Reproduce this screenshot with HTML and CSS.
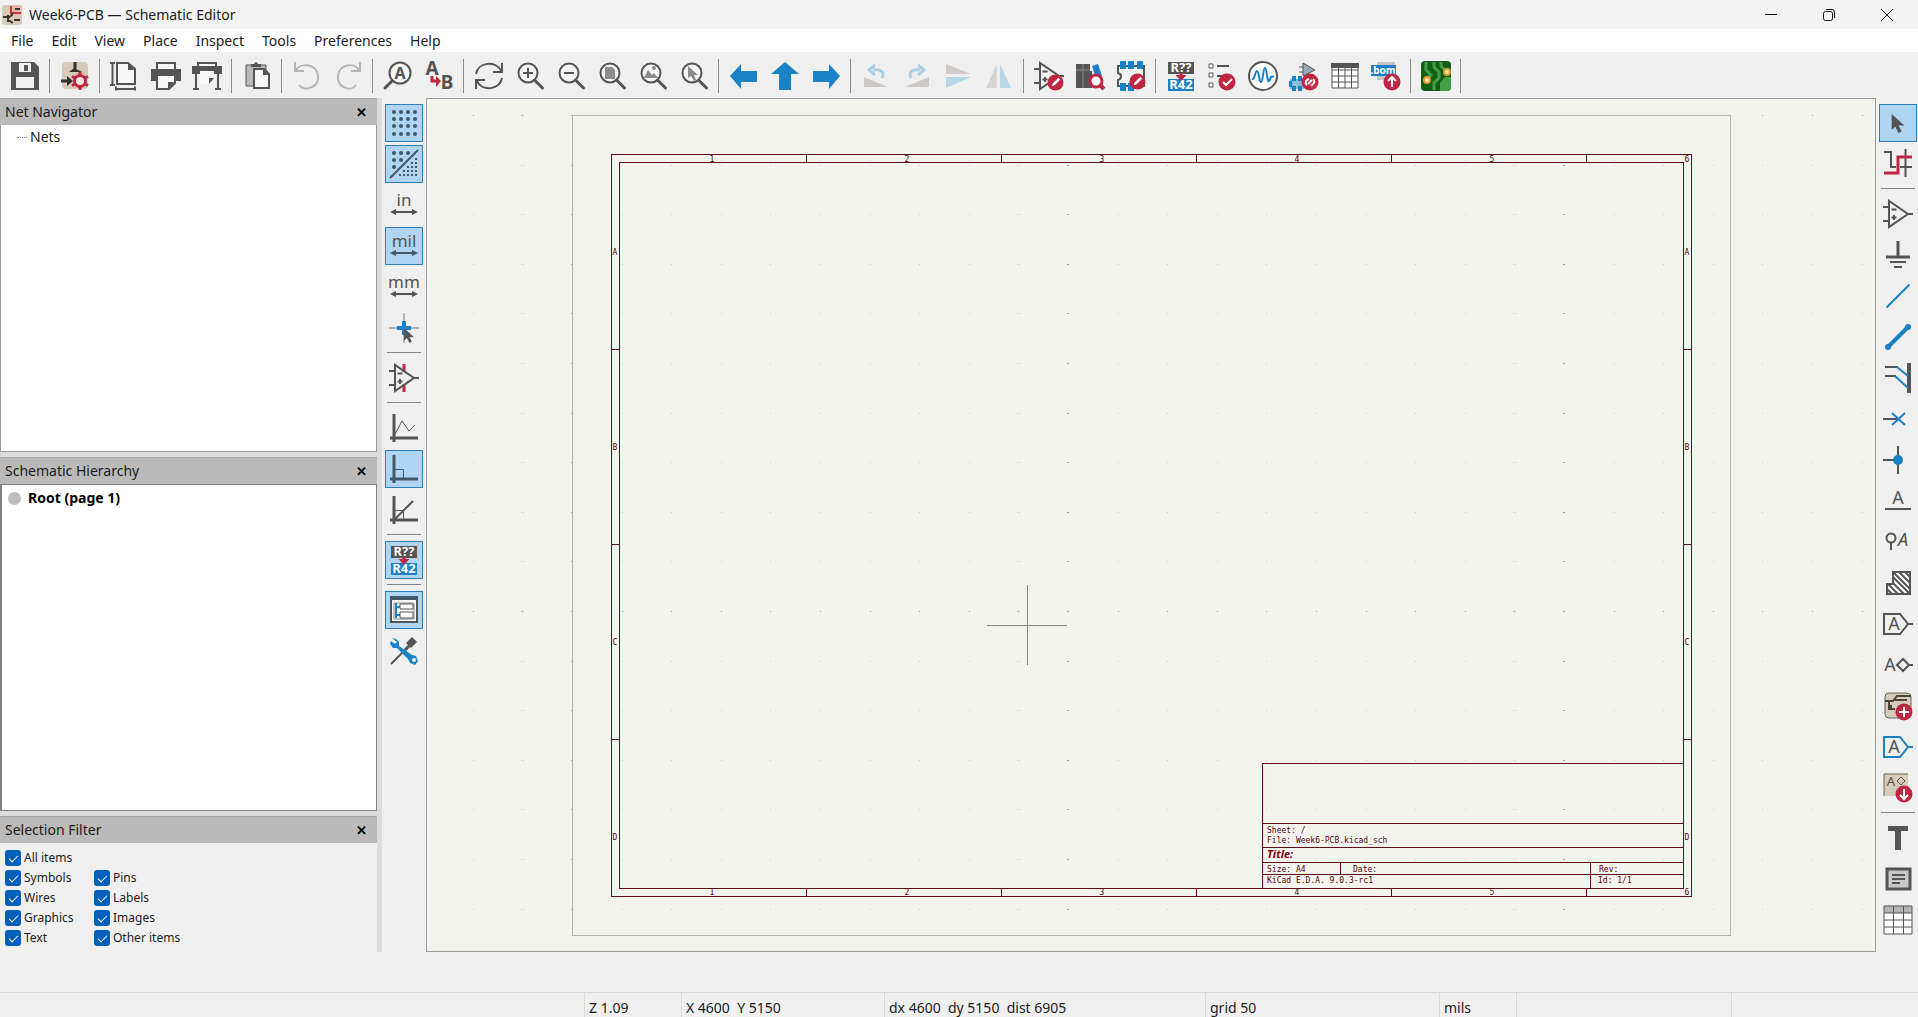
FILE: index.html
```html
<!DOCTYPE html>
<html lang="en">
<head>
<meta charset="utf-8">
<title>Week6-PCB — Schematic Editor</title>
<link rel="stylesheet" href="styles.css">
</head>
<body>
<svg class="defs" aria-hidden="true">
  <symbol id="lens" viewBox="0 0 30 30"><circle cx="13" cy="12" r="9.5" fill="#f6f6f6" stroke="#545454" stroke-width="2"/><path d="M19.500 19 27.500 27" stroke="#545454" stroke-width="3" stroke-linecap="round"/></symbol>
  <symbol id="annotate" viewBox="0 0 30 30"><path d="M2 1h26v12H2z" fill="#545454"/><path d="M2 18h26v12H2z" fill="#1a81c4"/><path d="M13.500 12h3v2h4L15 20l-5.500-6h4z" fill="#bf2641"/></symbol>
  <symbol id="amp" viewBox="0 0 30 30"><path d="M6 2v26L25 15zM0 8h6M0 22h6M25 15h5M8.500 10.500h5M8.500 18.500h5M11 16v5" fill="none" stroke="#545454" stroke-width="2"/></symbol>
  <symbol id="banned" viewBox="0 0 18 18"><circle cx="9" cy="9" r="8.500" fill="#bf2641"/><path d="M5 13l1-3 6-6 2 2-6 6z" fill="#fff"/></symbol>
  <symbol id="pointer" viewBox="0 0 12 18"><path d="M0 0v15l3.500-3 3 6 3-1.500-3-5.500H12z" fill="#545454"/></symbol>
</svg>

<header class="titlebar">
  <svg class="app-icon" viewBox="0 0 20 20"><rect width="20" height="20" rx="3" fill="#d5cbb8"/><path d="M9 0h8a3 3 0 0 1 3 3v7H9z" fill="#f3b5b0"/><path d="M9 1v7h10" stroke="#c03a3a" stroke-width="2" fill="none"/><path d="M1 12h5M6 10v7M6 13l4-3V8M6 15l5 3M12 15h6M13 4h5" stroke="#38352f" stroke-width="2" fill="none"/></svg>
  <h1>Week6-PCB — Schematic Editor</h1>
  <div class="window-buttons">
    <button aria-label="Minimize"><svg viewBox="0 0 14 14"><path d="M1 6.500h12"/></svg></button>
    <button aria-label="Restore"><svg viewBox="0 0 14 14"><rect x="1.500" y="3.500" width="9" height="9" rx="2"/><path d="M4 1.500h6a2.500 2.500 0 0 1 2.500 2.500v6"/></svg></button>
    <button aria-label="Close"><svg viewBox="0 0 14 14"><path d="M1 1l12 12M13 1L1 13"/></svg></button>
  </div>
</header>

<nav class="menubar">
  <button>File</button><button>Edit</button><button>View</button><button>Place</button><button>Inspect</button><button>Tools</button><button>Preferences</button><button>Help</button>
</nav>

<div class="toolbar" role="toolbar" aria-label="Main">
  <button aria-label="Save"><svg viewBox="0 0 30 30"><path d="M1 1h23l5 5v23H1z" fill="#545454"/><path d="M6 16h18v11H6z" fill="#f0f0f0"/><path d="M9 2h12v9H9z" fill="#f0f0f0"/><path d="M14 4h4v6h-4z" fill="#545454"/></svg></button>
  <hr>
  <button aria-label="Schematic setup"><svg viewBox="0 0 30 30"><rect x="2" y="1" width="26" height="27" rx="4" fill="#d5cbb8"/><path d="M15 1v7M1 20h9" stroke="#333" stroke-width="3" fill="none"/><path d="M7 15l6 5-6 5zM9 11l5-4 8 4z" fill="#333"/><circle cx="20" cy="20" r="5.500" fill="#f3e6e2" stroke="#bf2641" stroke-width="3"/><path d="M20 11v4M20 25v4M12 15.500l4 2M24 22.500l4 2M12 24.500l4-2M24 17.500l4-2" stroke="#bf2641" stroke-width="3"/></svg></button>
  <hr>
  <button aria-label="Page settings"><svg viewBox="0 0 30 30"><path d="M7 2h11l7 6v15H7z" fill="#f8f8f8" stroke="#545454" stroke-width="2"/><path d="M18 2v7h7z" fill="#545454"/><path d="M0 2h5M0 24h5M2.500 2v22M6 28h19M6 25.500v4M25 25.500v4" stroke="#545454" stroke-width="2"/></svg></button>
  <button aria-label="Print"><svg viewBox="0 0 30 30"><path d="M6 9V2h18v7" fill="#f8f8f8" stroke="#545454" stroke-width="2"/><path d="M0 8h30v12H0z" fill="#545454"/><path d="M6 14h18v8l-6 6H6z" fill="#f8f8f8" stroke="#545454" stroke-width="2"/><path d="M17 21h7l-7 7z" fill="#545454"/></svg></button>
  <button aria-label="Plot"><svg viewBox="0 0 30 30"><path d="M6 6V2h18v4" fill="#f8f8f8" stroke="#545454" stroke-width="2"/><path d="M0 5h30v8H0z" fill="#545454"/><path d="M8 10h14v8l-5 5H8z" fill="#f8f8f8"/><path d="M17 17h5l-5 6zM3 13h2v14h2v2H1v-2h2zM25 13h2v14h2v2h-6v-2h2z" fill="#545454"/></svg></button>
  <hr>
  <button aria-label="Paste"><svg viewBox="0 0 30 30"><path d="M4 4h20v21H4z" fill="#b9b9b9" stroke="#545454" stroke-width="1"/><path d="M9 6V3h3q2-4 4 0h3v3z" fill="#545454"/><path d="M12 8h10l5 5v14H12z" fill="#f8f8f8" stroke="#545454" stroke-width="2"/><path d="M21 8v6h6z" fill="#545454"/></svg></button>
  <hr>
  <button aria-label="Undo" disabled><svg viewBox="0 0 30 30"><path d="M3 1v9h9M4 9C9 1 25 3 26 15S12 31 7 24" fill="none" stroke="#b5b5b5" stroke-width="2"/></svg></button>
  <button aria-label="Redo" disabled><svg viewBox="0 0 30 30"><path d="M27 1v9h-9M26 9C21 1 6 3 5 15s13 16 18 9" fill="none" stroke="#b5b5b5" stroke-width="2"/></svg></button>
  <hr>
  <button aria-label="Find"><svg viewBox="0 0 30 30"><circle cx="17" cy="12" r="10.500" fill="#f6f6f6" stroke="#545454" stroke-width="2"/><path d="M9 20l-7 7" stroke="#545454" stroke-width="3" stroke-linecap="round"/><text x="17" y="18" class="bold">A</text></svg></button>
  <button aria-label="Find and replace"><svg viewBox="0 0 30 30"><text x="8" y="14" class="bold large">A</text><text x="23" y="28" class="bold large">B</text><path d="M8 15v5h6" fill="none" stroke="#bf2641" stroke-width="3"/><path d="M12 15l5 5-5 6z" fill="#bf2641"/></svg></button>
  <hr>
  <button aria-label="Refresh"><svg viewBox="0 0 30 30"><path d="M2 13C4 1 22-1 27 10M28 17C26 29 8 31 3 20M28 2v9h-9M2 28v-9h9" fill="none" stroke="#545454" stroke-width="2"/></svg></button>
  <button aria-label="Zoom in"><svg viewBox="0 0 30 30"><use href="#lens"/><path d="M8 12h10M13 7v10" stroke="#545454" stroke-width="2"/></svg></button>
  <button aria-label="Zoom out"><svg viewBox="0 0 30 30"><use href="#lens"/><path d="M8 12h10" stroke="#545454" stroke-width="2"/></svg></button>
  <button aria-label="Zoom to fit"><svg viewBox="0 0 30 30"><use href="#lens"/><path d="M8 6h7l3 3v9H8z" fill="#8c8c8c"/></svg></button>
  <button aria-label="Zoom to objects"><svg viewBox="0 0 30 30"><use href="#lens"/><path d="M6 17l4-8 4 5 2-2 4 5z" fill="#8c8c8c"/><circle cx="16" cy="7" r="2" fill="#8c8c8c"/></svg></button>
  <button aria-label="Zoom to selection"><svg viewBox="0 0 30 30"><use href="#lens"/><path d="M9 5v12l3-2 3 5 2-1-2-5h4z" fill="#8c8c8c"/></svg></button>
  <hr>
  <button aria-label="Navigate back"><svg viewBox="0 0 30 30"><path d="M1 15 12 3v7h16v11H12v7z" fill="#1a81c4"/></svg></button>
  <button aria-label="Navigate up"><svg viewBox="0 0 30 30"><path d="M15 1 29 13h-8v16H9V13H1z" fill="#1a81c4"/></svg></button>
  <button aria-label="Navigate forward"><svg viewBox="0 0 30 30"><path d="M29 15 18 3v7H2v11h16v7z" fill="#1a81c4"/></svg></button>
  <hr>
  <button aria-label="Rotate left" disabled><svg viewBox="0 0 30 30"><path d="M3 16v10h24z" fill="#cfc8c5"/><path d="M21 17c3-6-1-9-9-8M14 4L8 9l6 5" fill="none" stroke="#a9cfe3" stroke-width="3"/></svg></button>
  <button aria-label="Rotate right" disabled><svg viewBox="0 0 30 30"><path d="M27 16v10H3z" fill="#cfc8c5"/><path d="M9 17C6 11 10 8 18 9M16 4l6 5-6 5" fill="none" stroke="#a9cfe3" stroke-width="3"/></svg></button>
  <button aria-label="Mirror vertically" disabled><svg viewBox="0 0 30 30"><path d="M3 3v10h25z" fill="#d2cac8"/><path d="M3 27V16h25z" fill="#b5d7e6"/></svg></button>
  <button aria-label="Mirror horizontally" disabled><svg viewBox="0 0 30 30"><path d="M2 27h11V3z" fill="#d6d6d6"/><path d="M27 27H16V3z" fill="#b5d7e6"/></svg></button>
  <hr>
  <button aria-label="Symbol editor"><svg viewBox="0 0 30 30"><use href="#amp"/><use href="#banned" x="13" y="13" width="17" height="17"/></svg></button>
  <button aria-label="Symbol library browser"><svg viewBox="0 0 30 30"><path d="M1 3h14v24H1z" fill="#545454"/><path d="M8 3v24M1 9h14" stroke="#8a8a8a"/><path d="M17 5l6-2 4 12-6 2z" fill="#1a81c4"/><path d="M16 10v17" stroke="#545454" stroke-width="2"/><circle cx="21" cy="20" r="6" fill="#fff" stroke="#bf2641" stroke-width="3"/><path d="M25 24l4 4" stroke="#bf2641" stroke-width="4"/></svg></button>
  <button aria-label="Footprint editor"><svg viewBox="0 0 30 30"><path d="M2 5h26v20H2v-6c4-1 4-6 0-7z" fill="#f8f8f8" stroke="#545454" stroke-width="2"/><path d="M4 0h6v8H4zM12 0h6v8h-6zM21 0h6v8h-6zM4 22h6v8H4zM12 22h6v8h-6z" fill="#1a81c4"/><use href="#banned" x="13" y="12" width="17" height="17"/></svg></button>
  <hr>
  <button aria-label="Annotate"><svg viewBox="0 0 30 30"><use href="#annotate"/><text x="15" y="11" class="tag">R??</text><text x="15" y="28" class="tag">R42</text></svg></button>
  <button aria-label="Electrical rules checker"><svg viewBox="0 0 30 30"><path d="M2 3h4v4H2zM2 12h4v4H2zM2 22h4v4H2z" fill="#fff" stroke="#545454" stroke-width="1"/><path d="M10 5h12M10 15h8" stroke="#545454" stroke-width="2"/><circle cx="20" cy="21" r="8.500" fill="#bf2641"/><path d="M16 21l3 3 6-6" fill="none" stroke="#fff" stroke-width="2"/></svg></button>
  <button aria-label="Simulator"><svg viewBox="0 0 30 30"><circle cx="15" cy="15" r="14" fill="#fff" stroke="#545454" stroke-width="2"/><path d="M4 18c3 1 3-8 5-8s2 11 4 11 2-14 4-14 2 15 4 13 1-6 5-4" fill="none" stroke="#1a81c4" stroke-width="2"/></svg></button>
  <button aria-label="Assign footprints"><svg viewBox="0 0 30 30"><path d="M14 2v13l12-6z" fill="#98aab5" stroke="#545454"/><path d="M10 6h4M10 11h4" stroke="#545454"/><path d="M1 18h14v10H1z" fill="#8abbdc"/><path d="M3 15h4v5H3zM9 15h4v5H9zM3 25h4v5H3zM9 25h4v5H9zM0 20h3v6H0z" fill="#1a81c4"/><circle cx="21" cy="21" r="8.500" fill="#bf2641"/><path d="M18 24a3 3 0 0 1 0-5l2-1M24 18a3 3 0 0 1 0 5l-2 2M19 23l4-4" stroke="#fff" stroke-width="2" fill="none"/></svg></button>
  <button aria-label="Symbol fields table"><svg viewBox="0 0 30 30"><path d="M2 3h26v24H2zM2 9h26M2 15h26M2 21h26M8.500 3v24M15 3v24M21.500 3v24" fill="#fff" stroke="#545454" stroke-width="1"/><path d="M1 2h28v5H1z" fill="#545454"/></svg></button>
  <button aria-label="Generate bill of materials"><svg viewBox="0 0 30 30"><path d="M6 1h18v18H6z" fill="#c5c5c5"/><path d="M0 4h25v11H0z" fill="#1a81c4"/><text x="12" y="13" class="tag bom">.bom</text><circle cx="21" cy="21" r="8.500" fill="#bf2641"/><path d="M21 26V16M17 20l4-4 4 4" fill="none" stroke="#fff" stroke-width="2"/></svg></button>
  <hr>
  <button aria-label="PCB editor"><svg viewBox="0 0 30 30"><rect width="30" height="30" rx="4" fill="#125e16"/><path d="M5 1v8l5 5-5 5M13 1v5l5 5v6l-5 5v7M20 1v4l4 4" fill="none" stroke="#43a047" stroke-width="3"/><path d="M30 16h-6l-5 6v8h7a4 4 0 0 0 4-4z" fill="#43a047"/><circle cx="26" cy="11" r="3" fill="#fff3c0" stroke="#e39a2f" stroke-width="2"/><circle cx="6" cy="19" r="3" fill="#fff3c0" stroke="#e39a2f" stroke-width="2"/></svg></button>
  <hr>
</div>

<main class="workspace">
  <aside class="panels">
    <section class="panel tree-panel">
      <header><h2>Net Navigator</h2><button aria-label="Close Net Navigator">✕</button></header>
      <ul class="tree"><li class="branch">Nets</li></ul>
    </section>
    <section class="panel tree-panel">
      <header><h2>Schematic Hierarchy</h2><button aria-label="Close Schematic Hierarchy">✕</button></header>
      <ul class="tree framed"><li class="root">Root (page 1)</li></ul>
    </section>
    <section class="panel">
      <header><h2>Selection Filter</h2><button aria-label="Close Selection Filter">✕</button></header>
      <div class="filters">
        <label class="all"><input type="checkbox" checked>All items</label>
        <label><input type="checkbox" checked>Symbols</label><label><input type="checkbox" checked>Pins</label>
        <label><input type="checkbox" checked>Wires</label><label><input type="checkbox" checked>Labels</label>
        <label><input type="checkbox" checked>Graphics</label><label><input type="checkbox" checked>Images</label>
        <label><input type="checkbox" checked>Text</label><label><input type="checkbox" checked>Other items</label>
      </div>
    </section>
  </aside>

  <div class="sidebar left" role="toolbar" aria-label="Display options">
    <button class="on" aria-label="Grid"><svg viewBox="0 0 30 30"><path d="M5 4h.01M12 4h.01M19 4h.01M26 4h.01M5 11h.01M12 11h.01M19 11h.01M26 11h.01M5 18h.01M12 18h.01M19 18h.01M26 18h.01M5 26h.01M12 26h.01M19 26h.01M26 26h.01" stroke="#41586b" stroke-width="4" stroke-linecap="round"/></svg></button>
    <button class="on" aria-label="Grid overrides"><svg viewBox="0 0 30 30"><path d="M1 29 29 1" stroke="#41586b" stroke-width="2"/><path d="M5 4h.01M12 4h.01M19 4h.01M5 11h.01M12 11h.01M5 18h.01" stroke="#41586b" stroke-width="4" stroke-linecap="round"/><path d="M27 9v20M23 13v16M19 17v12M15 21v8M11 25v4" stroke="#41586b" stroke-width="2" stroke-dasharray="2 2"/></svg></button>
    <button aria-label="Inches"><svg viewBox="0 0 30 30"><text x="15" y="16" class="unit">in</text><path d="M1 22l6-3v2h16v-2l6 3-6 3v-2H7v2z" fill="#545454"/></svg></button>
    <button class="on" aria-label="Mils"><svg viewBox="0 0 30 30"><text x="15" y="16" class="unit">mil</text><path d="M1 22l6-3v2h16v-2l6 3-6 3v-2H7v2z" fill="#41586b"/></svg></button>
    <button aria-label="Millimeters"><svg viewBox="0 0 30 30"><text x="15" y="16" class="unit">mm</text><path d="M1 22l6-3v2h16v-2l6 3-6 3v-2H7v2z" fill="#545454"/></svg></button>
    <button aria-label="Full-window crosshair"><svg viewBox="0 0 30 30"><path d="M0 15h30M15 0v30" stroke="#777"/><path d="M8 15h14M15 8v14" stroke="#1a81c4" stroke-width="4"/><use href="#pointer" x="15" y="15" width="10" height="15"/></svg></button>
    <hr>
    <button aria-label="Hidden pins"><svg viewBox="0 0 30 30"><path d="M15 1v8M15 21v8" stroke="#bf2641" stroke-width="3"/><use href="#amp"/></svg></button>
    <hr>
    <button aria-label="Free angle lines"><svg viewBox="0 0 30 30"><path d="M5 1v28M1 25h28" stroke="#545454" stroke-width="3"/><path d="M6 21 13 8l7 10 6-6" fill="none" stroke="#545454" stroke-width="1"/></svg></button>
    <button class="on" aria-label="90 degree lines"><svg viewBox="0 0 30 30"><path d="M5 1v28M1 25h28" stroke="#41586b" stroke-width="3"/><path d="M5 15.500h9.500V25" fill="none" stroke="#41586b" stroke-width="1"/></svg></button>
    <button aria-label="45 degree lines"><svg viewBox="0 0 30 30"><path d="M5 1v28M1 25h28" stroke="#545454" stroke-width="3"/><path d="M5 25 24 6" stroke="#545454" stroke-width="2"/><path d="M5 15.500h9.500V25" fill="none" stroke="#545454"/></svg></button>
    <hr>
    <button class="on" aria-label="Annotate automatically"><svg viewBox="0 0 30 30"><use href="#annotate"/><text x="15" y="11" class="tag">R??</text><text x="15" y="28" class="tag">R42</text></svg></button>
    <hr>
    <button class="on" aria-label="Properties"><svg viewBox="0 0 30 30"><path d="M2 4h26v23H2z" fill="#fafafa" stroke="#545454" stroke-width="2"/><path d="M1 1h28v4H1z" fill="#41586b"/><path d="M5 8h20v16H5z" fill="none" stroke="#8a8a8a" stroke-width="1"/><path d="M7 8v15M7 12h4M7 20h4" stroke="#1a81c4" stroke-width="2"/><path d="M11 9h13v5H11zM11 17h13v6H11z" fill="#fff" stroke="#545454" stroke-width="1"/></svg></button>
    <button aria-label="Tools"><svg viewBox="0 0 30 30"><path d="M2 28 16 14" stroke="#545454" stroke-width="2"/><path d="M16 14l7-7" stroke="#545454" stroke-width="3"/><path d="M17 7l6-6 5 5-6 6z" fill="#545454"/><path d="M3 2l4 1 3 3v4l13 9 4 1 2 5-3 4-5-2-2-4L8 12H4L1 8l1-3 4 3 2-2z" fill="#1a81c4"/><circle cx="25" cy="24" r="2" fill="#eee"/></svg></button>
  </div>

  <div class="canvas">
    <svg viewBox="426 98 1450 854" preserveAspectRatio="xMidYMid slice" shape-rendering="crispEdges">
      <defs>
        <pattern id="dots" x="572" y="115" width="496" height="496" patternUnits="userSpaceOnUse">
          <g stroke="#cbcbc4" stroke-dasharray="1 49 1 48 1 49 1 48 1 49 1 49 1 48 1 49 1 47 1 1">
            <path d="M0 .5h495M0 50.500h495M0 99.500h495M0 149.500h495M0 198.500h495M0 248.500h495M0 298.500h495M0 347.500h495M0 397.500h495M0 446.500h495"/>
          </g>
          <g stroke="#a3a39d" stroke-dasharray="1 49 1 48 1 49 1 48 1 49 1 49 1 48 1 49 1 48 1 49">
            <path d="M0 .5h496M.5 0v496M495.500 0v496"/>
          </g>
        </pattern>
      </defs>
      <rect x="426" y="98" width="1450" height="854" fill="url(#dots)"/>
      <rect x="572.500" y="115.500" width="1158" height="820" class="page"/>
      <g class="frame">
        <rect x="611.500" y="154.500" width="1080" height="742"/>
        <rect x="619.500" y="162.500" width="1064" height="726"/>
        <path d="M806.500 154v8M1001.500 154v8M1196.500 154v8M1391.500 154v8M1586.500 154v8M806.500 888v8M1001.500 888v8M1196.500 888v8M1391.500 888v8M1586.500 888v8M611 349.500h8M611 544.500h8M611 739.500h8M1683 349.500h8M1683 544.500h8M1683 739.500h8"/>
        <path d="M1262.500 888V763.500H1683M1262 823.500h421M1262 847.500h421M1262 862.500h421M1262 874.500h421M1340.500 862v12M1590.500 862v26"/>
      </g>
      <g class="marks">
        <text x="712" y="162">1</text><text x="907" y="162">2</text><text x="1102" y="162">3</text><text x="1297" y="162">4</text><text x="1492" y="162">5</text><text x="1687" y="162">6</text>
        <text x="712" y="895">1</text><text x="907" y="895">2</text><text x="1102" y="895">3</text><text x="1297" y="895">4</text><text x="1492" y="895">5</text><text x="1687" y="895">6</text>
        <text x="615" y="255">A</text><text x="615" y="450">B</text><text x="615" y="645">C</text><text x="615" y="840">D</text>
        <text x="1687" y="255">A</text><text x="1687" y="450">B</text><text x="1687" y="645">C</text><text x="1687" y="840">D</text>
      </g>
      <g class="title-block">
        <text x="1267" y="833">Sheet: /</text>
        <text x="1267" y="843">File: Week6-PCB.kicad_sch</text>
        <text x="1267" y="858" class="sheet-title">Title:</text>
        <text x="1267" y="872">Size: A4</text>
        <text x="1353" y="872">Date:</text>
        <text x="1599" y="872">Rev:</text>
        <text x="1267" y="883">KiCad E.D.A. 9.0.3-rc1</text>
        <text x="1598" y="883">Id: 1/1</text>
      </g>
      <path d="M987 625.500h80M1027.500 585v80" class="crosshair"/>
    </svg>
  </div>

  <div class="sidebar right" role="toolbar" aria-label="Drawing tools">
    <button class="on" aria-label="Select"><svg viewBox="0 0 30 30"><use href="#pointer" x="8" y="6" width="14" height="19"/></svg></button>
    <button aria-label="Highlight nets"><svg viewBox="0 0 30 30"><path d="M1 3h7v15h5M17 18h12M22.500 0v28" fill="none" stroke="#545454" stroke-width="2"/><path d="M1 24h14V8h14" fill="none" stroke="#bf2641" stroke-width="3"/></svg></button>
    <hr>
    <button aria-label="Place symbols"><svg viewBox="0 0 30 30"><use href="#amp"/></svg></button>
    <button aria-label="Place power"><svg viewBox="0 0 30 30"><path d="M15 1v16M3 17h24" stroke="#545454" stroke-width="3"/><path d="M7 22h16M11 27h8" stroke="#545454" stroke-width="2"/></svg></button>
    <button aria-label="Draw wires"><svg viewBox="0 0 30 30"><path d="M4 26 26 4" stroke="#1a81c4" stroke-width="2" stroke-linecap="round"/></svg></button>
    <button aria-label="Draw buses"><svg viewBox="0 0 30 30"><path d="M5 25 25 5" stroke="#1a81c4" stroke-width="4"/><circle cx="5" cy="25" r="3" fill="#1a81c4"/><circle cx="25" cy="5" r="3" fill="#1a81c4"/></svg></button>
    <button aria-label="Wire to bus entries"><svg viewBox="0 0 30 30"><path d="M26 0v30" stroke="#545454" stroke-width="4"/><path d="M2 4h13M2 13h11" stroke="#545454" stroke-width="2"/><path d="M14 4l11 9M12 13l13 12" stroke="#1a81c4" stroke-width="2"/></svg></button>
    <button aria-label="No connect flags"><svg viewBox="0 0 30 30"><path d="M0 15h15" stroke="#545454" stroke-width="2"/><path d="M9 9l13 12M22 9 9 21" stroke="#1a81c4" stroke-width="2"/></svg></button>
    <button aria-label="Junctions"><svg viewBox="0 0 30 30"><path d="M0 15h15M15 1v28" stroke="#545454" stroke-width="2"/><circle cx="15" cy="15" r="5" fill="#1a81c4"/></svg></button>
    <button aria-label="Net labels"><svg viewBox="0 0 30 30"><text x="15" y="18" class="letter">A</text><path d="M2 23h26" stroke="#545454" stroke-width="2"/></svg></button>
    <button aria-label="Net class directives"><svg viewBox="0 0 30 30"><circle cx="8" cy="11" r="4.500" fill="none" stroke="#545454" stroke-width="2"/><path d="M8 15v8" stroke="#545454" stroke-width="2"/><text x="20" y="19" class="letter slanted">A</text></svg></button>
    <button aria-label="Rule areas"><svg viewBox="0 0 30 30"><path d="M10 4h17v22H4V16h6z" fill="#fff" stroke="#545454" stroke-width="2"/><path d="M4 21l5 5M5 16l10 10M10 15l11 11M10 9l17 17M10 4l17 17M16 4l11 11M22 4l5 5" stroke="#545454" stroke-width="2"/></svg></button>
    <button aria-label="Global labels"><svg viewBox="0 0 30 30"><path d="M1 5h16l8 10-8 10H1zM25 15h5" fill="none" stroke="#545454" stroke-width="2"/><text x="11" y="21" class="letter">A</text></svg></button>
    <button aria-label="Hierarchical labels"><svg viewBox="0 0 30 30"><text x="7" y="21" class="letter">A</text><path d="M14 15l6-6 6 6-6 6zM26 15h4" fill="none" stroke="#545454" stroke-width="2"/></svg></button>
    <button aria-label="Draw sheets"><svg viewBox="0 0 30 30"><rect x="2" y="2" width="26" height="25" rx="4" fill="#d5cbb8" stroke="#6b665b"/><path d="M2 10h8l4-5h14M6 10v8h6M8 14v5M12 9h12" fill="none" stroke="#4b4436" stroke-width="2"/><circle cx="21" cy="21" r="8.500" fill="#bf2641"/><path d="M16 21h10M21 16v10" stroke="#fff" stroke-width="2"/></svg></button>
    <button aria-label="Sheet pins"><svg viewBox="0 0 30 30"><path d="M1 5h16l8 10-8 10H1zM25 15h5" fill="none" stroke="#1a81c4" stroke-width="2"/><text x="11" y="21" class="letter">A</text></svg></button>
    <button aria-label="Sync sheet pins"><svg viewBox="0 0 30 30"><path d="M1 1h24v22H1z" fill="#d5cbb8"/><path d="M1 23V1h24" fill="none" stroke="#6b665b"/><text x="8" y="13" class="letter small">A</text><path d="M14 8l4-4 4 4-4 4z" fill="none" stroke="#545454"/><circle cx="21" cy="21" r="8.500" fill="#bf2641"/><path d="M21 16v9M17 22l4 4 4-4" fill="none" stroke="#fff" stroke-width="2"/></svg></button>
    <hr>
    <button aria-label="Text"><svg viewBox="0 0 30 30"><path d="M5 3h20v5h-7v19h-6V8H5z" fill="#545454"/></svg></button>
    <button aria-label="Text boxes"><svg viewBox="0 0 30 30"><path d="M4 5h23v20H4z" fill="#c8c8c8" stroke="#545454" stroke-width="3"/><path d="M9 11h13M9 15h13M9 19h8" stroke="#545454" stroke-width="2"/></svg></button>
    <button aria-label="Tables"><svg viewBox="0 0 30 30"><path d="M1 1h28v28H1z" fill="#fff"/><path d="M1 1h28v7H1z" fill="#b5b5b5"/><path d="M1 1h28v28H1zM1 8h28M1 15h28M1 22h28M10.500 1v28M20.500 1v28" fill="none" stroke="#545454" stroke-width="1"/></svg></button>
  </div>
</main>

<footer class="statusbar">
  <span></span><span>Z 1.09</span><span>X 4600&nbsp; Y 5150</span><span>dx 4600&nbsp; dy 5150&nbsp; dist 6905</span><span>grid 50</span><span>mils</span><span></span><span></span>
</footer>
</body>
</html>
```
FILE: styles.css
```css
* { box-sizing: border-box; }
body {
  margin: 0;
  min-height: 100vh;
  display: flex;
  flex-direction: column;
  background: #f0f0f0;
  color: #1b1b1b;
  font: 14px/20px "Noto Sans", "Open Sans", sans-serif;
}
button {
  margin: 0;
  padding: 0;
  border: 0;
  background: none;
  color: inherit;
  font: inherit;
}
h1, h2 { margin: 0; font-size: 14px; font-weight: 400; }
.defs { position: absolute; width: 0; height: 0; }

.titlebar {
  display: flex;
  align-items: center;
  height: 29px;
  padding: 0 2px;
  gap: 7px;
  background: #f3f3f3;
}
.app-icon { width: 20px; height: 20px; }
.window-buttons { display: flex; margin-left: auto; }
.window-buttons button { width: 58px; height: 28px; display: grid; place-items: center; }
.window-buttons svg { width: 14px; height: 14px; fill: none; stroke: #111; }

.menubar { display: flex; height: 23px; padding: 1px 0 0 11px; gap: 18px; background: #fff; }
.menubar button { line-height: 22px; }

.toolbar { display: flex; align-items: center; height: 46px; padding: 2px 0 0 4px; }
.toolbar button { display: grid; place-items: center; width: 41px; height: 38px; }
.toolbar hr { width: 1px; height: 34px; margin: 0 4px; border: 0; background: #8a8a8a; }
.toolbar svg, .sidebar svg { width: 30px; height: 30px; overflow: visible; }

.workspace { display: flex; flex: 1; margin-bottom: 40px; }
.panels { display: flex; flex-direction: column; gap: 5px; width: 382px; border-right: 5px solid #dcdcdc; background: #dcdcdc; }
.panel { display: flex; flex-direction: column; background: #f0f0f0; }
.tree-panel { flex: 1; }
.panel header {
  display: flex;
  align-items: center;
  justify-content: space-between;
  height: 27px;
  padding: 0 8px 0 5px;
  background: #bababa;
  border-top: 1px solid #a8a8a8;
}
.panel header button { width: 15px; font-size: 13px; font-weight: 700; color: #000; }
.tree {
  flex: 1;
  margin: 0;
  padding: 2px 0 0 16px;
  list-style: none;
  background: #fff;
  border: 1px solid #9a9a9a;
  border-top-width: 0;
}
.tree.framed { padding: 3px 0 0 6px; border: 1px solid #828282; border-left-width: 2px; }
.tree li { display: flex; align-items: center; }
.branch::before { content: ""; width: 10px; margin-right: 3px; border-top: 1px dotted #909090; }
.root { gap: 7px; font-weight: 700; color: #000; }
.root::before { content: ""; width: 13px; height: 13px; border-radius: 50%; background: #bdbdbd; }
.filters {
  display: grid;
  grid-template-columns: 89px 1fr;
  height: 109px;
  padding: 5px 5px;
  align-content: start;
  font-size: 12px;
}
.filters label { display: flex; align-items: center; gap: 3px; }
.filters .all { grid-column: 1 / 3; }
.filters input {
  appearance: none;
  width: 16px;
  height: 16px;
  margin: 0;
  border-radius: 3px;
  background: #005fb8;
  display: grid;
  place-items: center;
}
.filters input::before {
  content: "";
  width: 8px;
  height: 4px;
  border: solid #fff;
  border-width: 0 0 1px 1px;
  transform: translateY(-1px) rotate(-45deg);
}

.sidebar { display: flex; flex-direction: column; align-items: center; gap: 3px; padding-top: 6px; }
.left { width: 44px; }
.right { width: 42px; padding-left: 2px; }
.sidebar button { display: grid; place-items: center; width: 38px; height: 38px; border: 1px solid transparent; }
.sidebar button.on { background: #b0d5f3; border-color: #2e7eb5; }
.sidebar hr { width: 34px; height: 1px; margin: 2px 0 3px; border: 0; background: #858585; }

.canvas {
  flex: 1;
  position: relative;
  min-width: 0;
  background: #f4f4ee;
  border: 1px solid #9b9d97;
}
.canvas svg { position: absolute; inset: -1px; width: calc(100% + 2px); height: calc(100% + 2px); }
.page { fill: none; stroke: #b4b6b0; }
.frame { fill: none; stroke: #5e0d15; }
.marks, .title-block { font: 8px "DejaVu Sans Mono", monospace; fill: #5a0009; }
.marks { text-anchor: middle; }
.title-block .sheet-title { font: italic 700 11px "Noto Sans", sans-serif; fill: #7a000d; }
.crosshair { stroke: #85867f; }

.tag, .bold, .unit, .letter { font-family: "Noto Sans", sans-serif; text-anchor: middle; fill: #545454; }
.tag { font-size: 13px; font-weight: 700; fill: #fff; }
.tag.bom { font-size: 10px; }
.bold { font-size: 16px; font-weight: 700; }
.bold.large { font-size: 19px; }
.unit { font-size: 17px; }
.letter { font-size: 18px; }
.letter.slanted { font-style: italic; }
.letter.small { font-size: 13px; }

.statusbar {
  display: grid;
  grid-template-columns: minmax(0, 1fr) 97px 203px 321px 234px 77px 215px 187px;
  height: 25px;
  border-top: 1px solid #d9d9d9;
  line-height: 29px;
}
.statusbar span { padding-left: 4px; border-left: 1px solid #d9d9d9; white-space: nowrap; }
.statusbar span:first-child { border-left: 0; }
```
